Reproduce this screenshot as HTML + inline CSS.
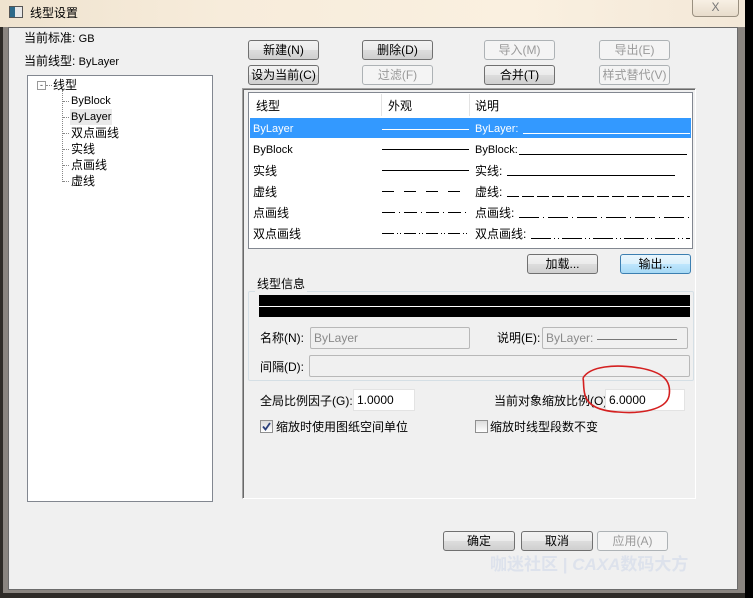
<!DOCTYPE html>
<html><head><meta charset="utf-8"><style>
*{margin:0;padding:0;box-sizing:border-box}
body{width:753px;height:598px;overflow:hidden;background:#1a1a1a;font-family:"Liberation Sans","Noto Sans CJK SC",sans-serif;font-size:12px;color:#000;position:relative}
.a{position:absolute}
.title{left:0;top:0;width:745px;height:27px;background:linear-gradient(90deg,#efe3cf,#f7ecdb 30%,#faf0e0 70%,#f3e8d8)}
.frame{left:0;top:27px;width:745px;height:571px;background:#2e2b27}
.client{left:8px;top:27px;width:730px;height:563px;background:#f0f0f0;border:1px solid #6b6b6b}
.btn{position:absolute;height:20px;border:1px solid #707070;border-radius:3px;background:linear-gradient(#f2f2f2,#ebebeb 50%,#dddddd 51%,#cfcfcf);text-align:center;line-height:18px;font-size:12px}
.dis{border-color:#adb2b5;background:#f4f4f4;color:#9a9a9a}
.box{position:absolute;background:#fff;border:1px solid #828790}
.t{position:absolute;white-space:nowrap;line-height:16px}
.in{position:absolute;height:22px;border:1px solid #abadb3;background:#fff;padding:2px 3px;line-height:16px}
.ind{background:#f0f0f0;color:#8a8a8a;border-color:#b8b8b8;border-radius:2px}
</style></head><body>
<div class="a title"></div>
<div class="a" style="left:9px;top:6px;width:14px;height:12px;border:1px solid #555;background:linear-gradient(90deg,#2d6a8a 40%,#e8e8e8 40%)"></div>
<div class="t" style="left:30px;top:5px;font-size:12px">线型设置</div>
<div class="a" style="left:692px;top:0;width:47px;height:17px;border:1px solid #9a9080;border-top:none;border-radius:0 0 4px 4px;background:linear-gradient(#f8f0e4,#e8dccb);text-align:center;font-size:12px;line-height:15px;color:#777">X</div>
<div class="a frame"></div>
<div class="a" style="left:3px;top:27px;width:5px;height:566px;background:#8a8580"></div>
<div class="a" style="left:738px;top:27px;width:7px;height:566px;background:#8a8580"></div>
<div class="a" style="left:3px;top:590px;width:742px;height:3px;background:#8a8580"></div>
<div class="a" style="left:745px;top:0;width:8px;height:598px;background:#000"></div>
<div class="a client"></div>

<div class="t" style="left:24px;top:30px">当前标准: <span style="font-size:11px">GB</span></div>
<div class="t" style="left:24px;top:53px">当前线型: <span style="font-size:11px">ByLayer</span></div>

<div class="box" style="left:27px;top:75px;width:186px;height:427px"></div>
<div class="a" style="left:37px;top:81px;width:9px;height:9px;border:1px solid #999;background:#fff;font-size:9px;line-height:6px;text-align:center;color:#333">-</div>
<div class="a" style="left:46px;top:85px;width:6px;border-top:1px dotted #888"></div>
<div class="a" style="left:62px;top:90px;height:92px;border-left:1px dotted #888"></div>
<div class="t" style="left:53px;top:77px">线型</div>
<div class="t" style="left:71px;top:93px;font-size:11px">ByBlock</div>
<div class="t" style="left:70px;top:109px;font-size:11px;background:#eaeaea;padding:0 1px">ByLayer</div>
<div class="t" style="left:71px;top:125px">双点画线</div>
<div class="t" style="left:71px;top:141px">实线</div>
<div class="t" style="left:71px;top:157px">点画线</div>
<div class="t" style="left:71px;top:173px">虚线</div>
<div class="a" style="left:63px;top:101px;width:6px;border-top:1px dotted #888"></div>
<div class="a" style="left:63px;top:117px;width:6px;border-top:1px dotted #888"></div>
<div class="a" style="left:63px;top:133px;width:6px;border-top:1px dotted #888"></div>
<div class="a" style="left:63px;top:149px;width:6px;border-top:1px dotted #888"></div>
<div class="a" style="left:63px;top:165px;width:6px;border-top:1px dotted #888"></div>
<div class="a" style="left:63px;top:181px;width:6px;border-top:1px dotted #888"></div>

<div class="btn" style="left:248px;top:40px;width:71px">新建(N)</div>
<div class="btn" style="left:362px;top:40px;width:71px">删除(D)</div>
<div class="btn dis" style="left:484px;top:40px;width:71px">导入(M)</div>
<div class="btn dis" style="left:599px;top:40px;width:71px">导出(E)</div>
<div class="btn" style="left:248px;top:65px;width:71px">设为当前(C)</div>
<div class="btn dis" style="left:362px;top:65px;width:71px">过滤(F)</div>
<div class="btn" style="left:484px;top:65px;width:71px">合并(T)</div>
<div class="btn dis" style="left:599px;top:65px;width:71px">样式替代(V)</div>

<div class="a" style="left:242px;top:88px;width:454px;height:411px;border:1px solid #a0a0a0;border-right-color:#fff;border-bottom-color:#fff;box-shadow:inset 1px 1px 0 #696969"></div>
<div class="box" style="left:248px;top:92px;width:445px;height:157px"></div>
<div class="a" style="left:381px;top:94px;height:22px;border-left:1px solid #e3e3e3"></div>
<div class="a" style="left:469px;top:94px;height:22px;border-left:1px solid #e3e3e3"></div>
<div class="t" style="left:256px;top:98px">线型</div>
<div class="t" style="left:388px;top:98px">外观</div>
<div class="t" style="left:475px;top:98px">说明</div>
<div class="a" style="left:250px;top:118px;width:441px;height:20px;background:#3399ff"></div>
<div class="t" style="left:253px;top:121px;color:#fff;font-size:11px">ByLayer</div>
<div class="t" style="left:475px;top:121px;color:#fff;font-size:11px">ByLayer:</div>
<div class="t" style="left:253px;top:142px;font-size:11px">ByBlock</div>
<div class="t" style="left:475px;top:142px;font-size:11px">ByBlock:</div>
<div class="t" style="left:253px;top:163px">实线</div>
<div class="t" style="left:475px;top:163px">实线:</div>
<div class="t" style="left:253px;top:184px">虚线</div>
<div class="t" style="left:475px;top:184px">虚线:</div>
<div class="t" style="left:253px;top:205px">点画线</div>
<div class="t" style="left:475px;top:205px">点画线:</div>
<div class="t" style="left:253px;top:226px">双点画线</div>
<div class="t" style="left:475px;top:226px">双点画线:</div>
<svg class="a" style="left:0;top:0" width="753" height="598">
<g stroke-width="1" fill="none">
<line x1="382" y1="129.5" x2="469" y2="129.5" stroke="#fff"/>
<line x1="523" y1="133.5" x2="690" y2="133.5" stroke="#fff"/>
<line x1="382" y1="149.5" x2="469" y2="149.5" stroke="#000"/>
<line x1="519" y1="154.5" x2="687" y2="154.5" stroke="#000"/>
<line x1="382" y1="170.5" x2="469" y2="170.5" stroke="#000"/>
<line x1="507" y1="175.5" x2="675" y2="175.5" stroke="#000"/>
<line x1="382" y1="191.5" x2="469" y2="191.5" stroke="#000" stroke-dasharray="12,10"/>
<line x1="507" y1="196.5" x2="690" y2="196.5" stroke="#000" stroke-dasharray="12,3"/>
<line x1="382" y1="212.5" x2="469" y2="212.5" stroke="#000" stroke-dasharray="13,4,1,4"/>
<line x1="519" y1="217.5" x2="690" y2="217.5" stroke="#000" stroke-dasharray="20,4,1,4"/>
<line x1="382" y1="233.5" x2="469" y2="233.5" stroke="#000" stroke-dasharray="12,3,1,2,1,3"/>
<line x1="531" y1="238.5" x2="690" y2="238.5" stroke="#000" stroke-dasharray="20,3,1,3,1,3"/>
</g></svg>

<div class="btn" style="left:527px;top:254px;width:71px">加载...</div>
<div class="btn" style="left:620px;top:254px;width:71px;border-color:#3c7fb1;background:linear-gradient(#eaf6fd,#d9f0fc 50%,#bee6fd 51%,#a7d9f5)">输出...</div>

<div class="a" style="left:248px;top:291px;width:446px;height:90px;border:1px solid #d5dfe5;border-radius:2px"></div>
<div class="t" style="left:255px;top:276px;background:#f0f0f0;padding:0 2px">线型信息</div>
<div class="a" style="left:259px;top:295px;width:431px;height:22px;background:#000"></div>
<div class="a" style="left:259px;top:306px;width:431px;height:1px;background:#fff"></div>
<div class="t" style="left:260px;top:330px">名称(N):</div>
<div class="in ind" style="left:310px;top:327px;width:160px">ByLayer</div>
<div class="t" style="left:497px;top:330px">说明(E):</div>
<div class="in ind" style="left:542px;top:327px;width:146px">ByLayer: <span style="display:inline-block;width:80px;border-bottom:1px solid #777;vertical-align:2px"></span></div>
<div class="t" style="left:260px;top:359px">间隔(D):</div>
<div class="in ind" style="left:309px;top:355px;width:381px"></div>

<div class="t" style="left:260px;top:393px">全局比例因子(G):</div>
<div class="in" style="left:353px;top:389px;width:62px;border-color:#e3e3e3">1.0000</div>
<div class="t" style="left:494px;top:393px">当前对象缩放比例(O)</div>
<div class="in" style="left:605px;top:389px;width:80px;border-color:#e3e3e3">6.0000</div>
<div class="a" style="left:260px;top:420px;width:13px;height:13px;border:1px solid #8f8f8f;background:linear-gradient(#dcdcdc,#fff)"></div>
<svg class="a" style="left:261px;top:421px" width="11" height="11"><path d="M2 5.5 L4.5 8.5 L9 2" stroke="#2a3f7a" stroke-width="1.8" fill="none"/></svg>
<div class="t" style="left:276px;top:419px">缩放时使用图纸空间单位</div>
<div class="a" style="left:475px;top:420px;width:13px;height:13px;border:1px solid #8f8f8f;background:linear-gradient(#dcdcdc,#fff)"></div>
<div class="t" style="left:490px;top:419px">缩放时线型段数不变</div>

<svg class="a" style="left:0;top:0" width="753" height="598"><path d="M583 378 C590 366,615 364,640 368 C662 372,672 380,669 396 C666 410,640 414,618 412 C600 411,588 406,585 395 C583 388,584 382,583 378" stroke="#d42020" stroke-width="1.6" fill="none"/></svg>

<div class="btn" style="left:443px;top:531px;width:72px">确定</div>
<div class="btn" style="left:521px;top:531px;width:72px">取消</div>
<div class="btn dis" style="left:597px;top:531px;width:71px">应用(A)</div>
<div class="t" style="left:490px;top:555px;font-size:17px;line-height:20px;color:#dde2ec;font-weight:bold">咖迷社区 | <i>CAXA</i>数码大方</div>
</body></html>
